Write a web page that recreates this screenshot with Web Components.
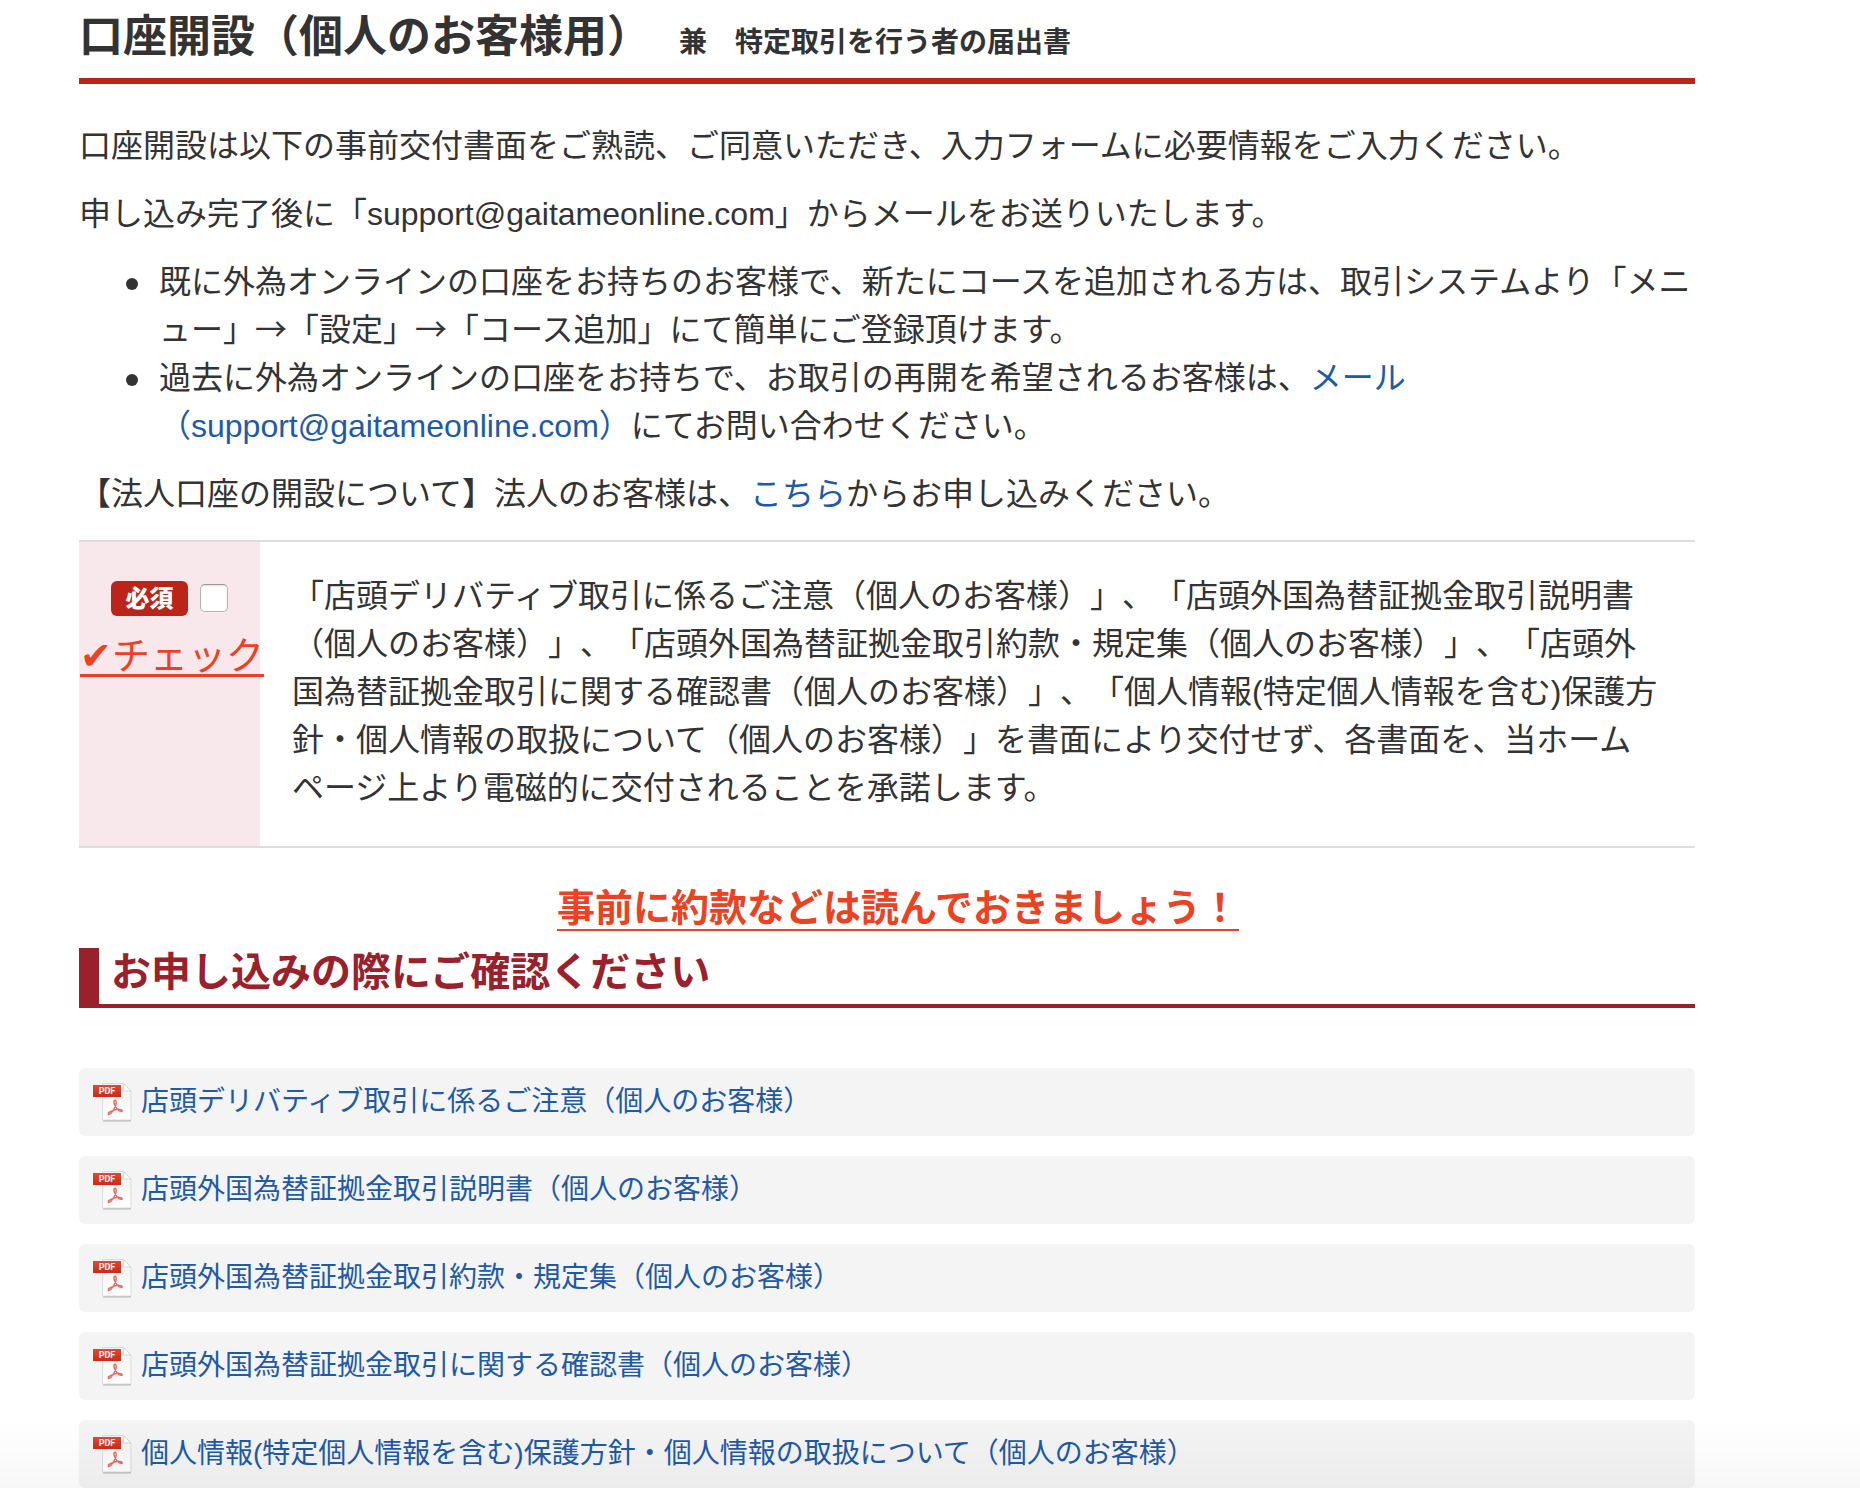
<!DOCTYPE html>
<html lang="ja">
<head>
<meta charset="utf-8">
<meta name="viewport" content="width=device-width, initial-scale=1">
<title>口座開設（個人のお客様用）</title>
<style>
  :root {
    --text: #333;
    --link: #1d5aa8;
    --red: #bb2419;
    --wine: #9a212b;
    --memo: #eb4223;
  }
  body {
    margin: 0;
    background: #fff;
    color: var(--text);
    font-family: "Liberation Sans", "Noto Sans CJK JP", sans-serif;
    font-size: 32px;
    line-height: 48px;
    text-spacing-trim: space-all;
  }
  a { color: var(--link); text-decoration: none; }
  a:hover { text-decoration: underline; }
  .arrow { font-family: "Noto Sans CJK JP", sans-serif; line-height: 1; }
</style>
</head>
<body>
<account-page>
  <page-title>口座開設（個人のお客様用）<span slot="sub">　兼　特定取引を行う者の届出書</span></page-title>
  <intro-block>
    <intro-line>口座開設は以下の事前交付書面をご熟読、ご同意いただき、入力フォームに必要情報をご入力ください。</intro-line>
    <intro-line>申し込み完了後に「support@gaitameonline.com」からメールをお送りいたします。</intro-line>
    <bullet-list>
      <bullet-item>既に外為オンラインの口座をお持ちのお客様で、新たにコースを追加される方は、取引システムより「メニュー」<span class="arrow">→</span>「設定」<span class="arrow">→</span>「コース追加」にて簡単にご登録頂けます。</bullet-item>
      <bullet-item>過去に外為オンラインの口座をお持ちで、お取引の再開を希望されるお客様は、<a href="mailto:support@gaitameonline.com"><span>メール</span><span>（support@gaitameonline.com）</span></a>にてお問い合わせください。</bullet-item>
    </bullet-list>
    <intro-line>【法人口座の開設について】法人のお客様は、<a href="#corporate">こちら</a>からお申し込みください。</intro-line>
  </intro-block>
  <consent-row>「店頭デリバティブ取引に係るご注意（個人のお客様）」、「店頭外国為替証拠金取引説明書（個人のお客様）」、「店頭外国為替証拠金取引約款・規定集（個人のお客様）」、「店頭外国為替証拠金取引に関する確認書（個人のお客様）」、「個人情報(特定個人情報を含む)保護方針・個人情報の取扱について（個人のお客様）」を書面により交付せず、各書面を、当ホームページ上より電磁的に交付されることを承諾します。</consent-row>
  <memo-line>事前に約款などは読んでおきましょう！</memo-line>
  <section-heading>お申し込みの際にご確認ください</section-heading>
  <pdf-list>
    <pdf-link href="#pdf1">店頭デリバティブ取引に係るご注意（個人のお客様）</pdf-link>
    <pdf-link href="#pdf2">店頭外国為替証拠金取引説明書（個人のお客様）</pdf-link>
    <pdf-link href="#pdf3">店頭外国為替証拠金取引約款・規定集（個人のお客様）</pdf-link>
    <pdf-link href="#pdf4">店頭外国為替証拠金取引に関する確認書（個人のお客様）</pdf-link>
    <pdf-link href="#pdf5">個人情報(特定個人情報を含む)保護方針・個人情報の取扱について（個人のお客様）</pdf-link>
  </pdf-list>
</account-page>

<script>
const define = (name, html) => {
  customElements.define(name, class extends HTMLElement {
    constructor() {
      super();
      this.attachShadow({ mode: 'open' }).innerHTML = html;
    }
  });
};

define('account-page', `
  <style>
    :host { display: block; }
    main { margin: 0 165px 0 79px; }
    .shade {
      position: fixed; left: 0; right: 0; bottom: 0; height: 68px;
      background: linear-gradient(rgba(0,0,0,0), rgba(0,0,0,.03));
      pointer-events: none;
    }
  </style>
  <main><slot></slot></main>
  <div class="shade"></div>`);

define('page-title', `
  <style>
    :host { display: block; }
    h1 {
      margin: 0; padding: 4px 0 2px; border-bottom: 6px solid var(--red);
      font-size: 44px; line-height: 66px; font-weight: 700;
    }
    small { font-size: 28px; }
  </style>
  <h1><slot></slot><small><slot name="sub"></slot></small></h1>`);

define('intro-block', `
  <style>
    :host { display: flex; flex-direction: column; gap: 20px; padding: 38px 0 22px; }
  </style>
  <slot></slot>`);

define('intro-line', `
  <style>
    :host { display: block; }
    p { margin: 0; }
  </style>
  <p><slot></slot></p>`);

define('bullet-list', `
  <style>
    :host { display: block; }
    div { display: flex; flex-direction: column; padding-left: 47px; }
  </style>
  <div role="list"><slot></slot></div>`);

define('bullet-item', `
  <style>
    :host { display: flex; gap: 21px; }
    i { flex: none; width: 12px; height: 12px; margin-top: 20px; border-radius: 50%; background: currentColor; }
    div { flex: 1; min-width: 0; }
  </style>
  <i></i><div role="listitem"><slot></slot></div>`);

define('consent-row', `
  <style>
    :host { display: flex; border: solid #ddd; border-width: 2px 0; }
    .head { flex: none; box-sizing: border-box; width: 181px; padding-top: 32px; background: #f8e8ec; }
    .need { display: flex; align-items: center; gap: 12px; height: 48px; padding-left: 32px; }
    .badge {
      width: 77px; border-radius: 6px; background: var(--red); color: #fff;
      font-size: 24px; line-height: 35px; font-weight: 900; text-align: center;
    }
    input {
      appearance: none; width: 28px; height: 28px; margin: 0;
      border: 1px solid #b4b4b4; border-top-color: #999; border-radius: 5px;
      background: #fff; box-shadow: inset 0 1px 2px rgba(0,0,0,.12);
    }
    input:checked { background: var(--red); }
    .memo {
      margin: 10px 0 0 1px; color: var(--memo); font-size: 38px; white-space: nowrap;
      text-decoration: underline 3px; text-underline-offset: 5px; text-decoration-skip-ink: none;
    }
    label { flex: 1; min-width: 0; padding: 30px 32px 34px; }
  </style>
  <div class="head">
    <div class="need"><span class="badge">必須</span><input type="checkbox" id="agree"></div>
    <div class="memo">✔チェック</div>
  </div>
  <label for="agree"><slot></slot></label>`);

define('memo-line', `
  <style>
    :host { display: block; padding: 36px 0 14px 22px; text-align: center; }
    strong {
      color: var(--memo); font-size: 38px; font-weight: 700;
      text-decoration: underline 2px; text-underline-offset: 8px; text-decoration-skip-ink: none;
    }
  </style>
  <strong><slot></slot></strong>`);

define('section-heading', `
  <style>
    :host { display: block; }
    h2 {
      margin: 0; padding: 0 0 8px 12px; color: var(--wine);
      border: solid var(--wine); border-width: 0 0 4px 20px;
      font-size: 40px; line-height: 48px; font-weight: 700;
    }
  </style>
  <h2><slot></slot></h2>`);

define('pdf-list', `
  <style>
    :host { display: flex; flex-direction: column; gap: 20px; padding-top: 60px; }
  </style>
  <slot></slot>`);

customElements.define('pdf-link', class extends HTMLElement {
  constructor() {
    super();
    this.attachShadow({ mode: 'open' }).innerHTML = `
  <style>
    :host { display: block; font-size: 28px; }
    a {
      display: flex; align-items: center; gap: 8px; padding: 10px 14px;
      border-radius: 6px; background: #f4f4f4; color: var(--link); text-decoration: none;
    }
    a:hover { text-decoration: underline; }
    svg { flex: none; width: 40px; height: 40px; }
  </style>
  <a>
    <svg viewBox="0 0 40 40" aria-hidden="true">
      <defs>
        <linearGradient id="p" x1="0" y1="0" x2="0" y2="1"><stop offset="0" stop-color="#f1f1f1"/><stop offset="1" stop-color="#fff"/></linearGradient>
        <linearGradient id="r" x1="0" y1="0" x2="0" y2="1"><stop offset="0" stop-color="#e4472f"/><stop offset="1" stop-color="#c92c17"/></linearGradient>
      </defs>
      <path d="M10 37.500h28v2h-28z" fill="#b5b5b5"/>
      <path d="M9.500 1.500h21l7.500 7.500v29h-28.500z" fill="url(#p)" stroke="#dcdcdc" stroke-width="1"/>
      <path d="M30.500 1.500v7.500h7.500z" fill="#fff" stroke="#d4d4d4" stroke-width="1"/>
      <path d="M0 3h28v12h-28z" fill="url(#r)"/>
      <text x="14" y="12" fill="#fff" font-family="Roboto, sans-serif" font-size="9" font-weight="700" text-anchor="middle">PDF</text>
      <path d="M21.500 18.500c1.500-.8 2.200 1 1.200 4.500-1.200 4.200-4.200 8.500-6.400 9.400-1.500.5-1.500-1 .2-2.200 3.500-2.300 8.500-3.400 11.500-2.600 2 .7 1.200 2-.6 1.600-2.600-.7-5-4.200-6-7.200-.6-1.900-.6-3.200.1-3.500z" fill="none" stroke="#e2574c" stroke-width="1.500" stroke-linejoin="round" opacity=".85"/>
    </svg>
    <span><slot></slot></span>
  </a>`;
  }
  connectedCallback() {
    this.shadowRoot.querySelector('a').setAttribute('href', this.getAttribute('href') || '#');
  }
});
</script>
</body>
</html>
